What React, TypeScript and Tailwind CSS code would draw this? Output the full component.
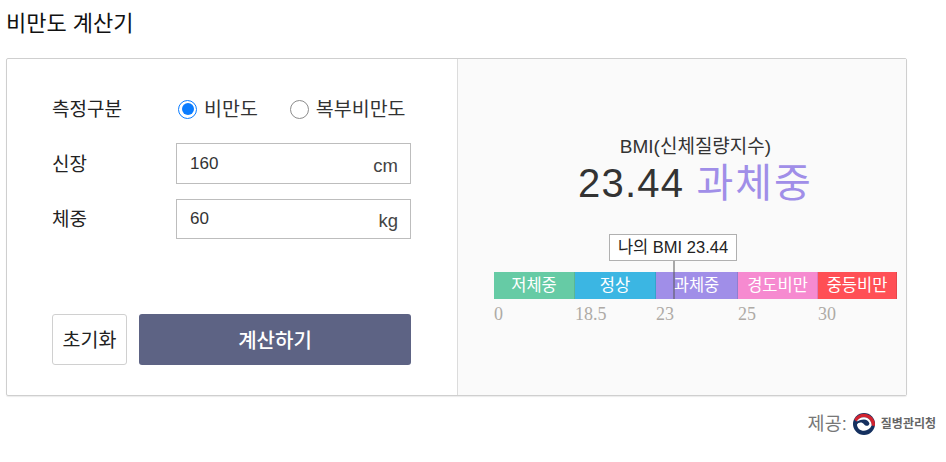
import React from 'react';

const segments = [
  { label: '저체중', tick: '0', w: 'w-[81px]', bg: 'bg-[#66cba5]' },
  { label: '정상', tick: '18.5', w: 'w-[81px]', bg: 'bg-[#3bb6e3]' },
  { label: '과체중', tick: '23', w: 'w-[82px]', bg: 'bg-[#a08ee8]' },
  { label: '경도비만', tick: '25', w: 'w-[80px]', bg: 'bg-[#f68ad0]' },
  { label: '중등비만', tick: '30', w: 'w-[79px]', bg: 'bg-[#ff4f55]' },
];

const font = "font-['Liberation_Sans','Noto_Sans_CJK_KR',sans-serif]";

const Field: React.FC<{ label: string; value: string; unit: string; height: string }> = ({ label, value, unit, height }) => (
  <div className="flex items-center">
    <span className="mt-[3px] w-[124px] text-[19px] text-[#222]">{label}</span>
    <div className={`${height} flex w-[235px] items-center justify-between border border-[#bdbdbd] pl-[13px] pr-[12px]`}>
      <span className="text-[17px] text-[#333]">{value}</span>
      <span className="mt-1 text-[18.5px] text-[#444]">{unit}</span>
    </div>
  </div>
);

export default function App() {
  return (
    <div className={`${font} h-[462px] w-[946px] overflow-hidden bg-white`}>
      <h1 className="pl-[6px] pt-[9px] text-[22px] leading-[30px] text-[#111]">비만도 계산기</h1>

      <div className="ml-[6px] mt-[19px] flex h-[338px] w-[901px] rounded-[2px] border border-[#cfcfcf] shadow-[0_1px_1px_rgba(0,0,0,0.08)]">
        <div className="flex w-[451px] flex-col border-r border-[#dcdcdc] pl-[45px] pt-[36px]">
          <div className="flex h-[28px] items-center">
            <span className="mt-[2px] w-[126px] text-[19px] text-[#222]">측정구분</span>
            <span className="flex items-center">
              <span className="flex h-[19px] w-[19px] items-center justify-center rounded-full border border-[#0a7cff]">
                <span className="h-[12px] w-[12px] rounded-full bg-[#0a7cff]" />
              </span>
              <span className="ml-[7px] mt-[1px] text-[19.5px] text-[#333]">비만도</span>
            </span>
            <span className="ml-[32px] flex items-center">
              <span className="h-[19px] w-[19px] rounded-full border border-[#8c8c8c]" />
              <span className="ml-[7px] mt-[1px] text-[19.5px] text-[#333]">복부비만도</span>
            </span>
          </div>

          <div className="mt-[20px] flex flex-col gap-[15px]">
            <Field label="신장" value="160" unit="cm" height="h-[41px]" />
            <Field label="체중" value="60" unit="kg" height="h-[40px]" />
          </div>

          <div className="mt-[75px] flex gap-[12px]">
            <button className="h-[51px] w-[75px] rounded-[3px] border border-[#d0d0d0] bg-white pt-[3px] text-[19.5px] text-[#222]">초기화</button>
            <button className="h-[51px] w-[272px] rounded-[3px] bg-[#5d6384] pt-[2px] text-[20px] font-medium text-white">계산하기</button>
          </div>
        </div>

        <div className="flex flex-1 flex-col items-center bg-[#fafafa] pl-[27px] pt-[76px]">
          <div className="text-[19px] leading-[24px] text-[#333]">BMI(신체질량지수)</div>
          <div className="mt-[1px] text-[40px] leading-[46px] tracking-[1.2px] text-[#333]">
            23.44 <span className="tracking-[2px] text-[#a08ee8]">과체중</span>
          </div>

          <div className="relative mt-[28px] w-[403px] pt-[38px]">
            <div className="absolute left-[115px] top-0 flex h-[27px] w-[128px] items-center justify-center border border-[#b0b0b0] bg-white text-[16.5px] text-[#222]">
              나의 BMI 23.44
            </div>
            <div className="absolute left-[179px] top-[27px] z-10 h-[38px] w-[2px] bg-[#555]/50" />
            <div className="flex">
              {segments.map((s) => (
                <div key={s.label} className={`${s.w} ${s.bg} flex h-[27px] items-center justify-center border-r border-black/10 text-[16.5px] text-white`}>
                  {s.label}
                </div>
              ))}
            </div>
            <div className="mt-[5px] flex">
              {segments.map((s) => (
                <div key={s.tick} className={`${s.w} font-['Liberation_Serif',serif] text-[18px] leading-[20px] text-[#aeaaa6]`}>
                  {s.tick}
                </div>
              ))}
            </div>
          </div>
        </div>
      </div>

      <div className="mr-[10px] mt-[14px] flex items-center justify-end">
        <span className="text-[18.5px] text-[#777]">제공:</span>
        <svg className="ml-[6px]" width="22" height="22" viewBox="0 0 22 22">
          <circle cx="11" cy="11" r="11" fill="#14305f" />
          <path d="M1.2 6.8A11 11 0 0 1 22 11C22 11.6 21.9 12.4 21.8 13L18.6 12.6C18.9 9 16 4.2 11 4.2C7.6 4.2 5 6 3.8 8.4Z" fill="#d2232f" />
          <path d="M3.8 8.4C5 6 7.6 4.2 11 4.2C16 4.2 18.9 9 18.6 12.6C17.2 15.8 14.2 17.8 11 17.8C7 17.8 4 14.6 4 11.4C5 9.4 9 8.4 11 11.2C12.8 13.4 16 13.4 16.4 10.2C15.6 7.8 13.4 6.4 11 6.4C8 6.4 5 8 3.8 8.4Z" fill="#fff" />
        </svg>
        <span className="ml-[6px] text-[12px] font-bold text-[#666]">질병관리청</span>
      </div>
    </div>
  );
}
